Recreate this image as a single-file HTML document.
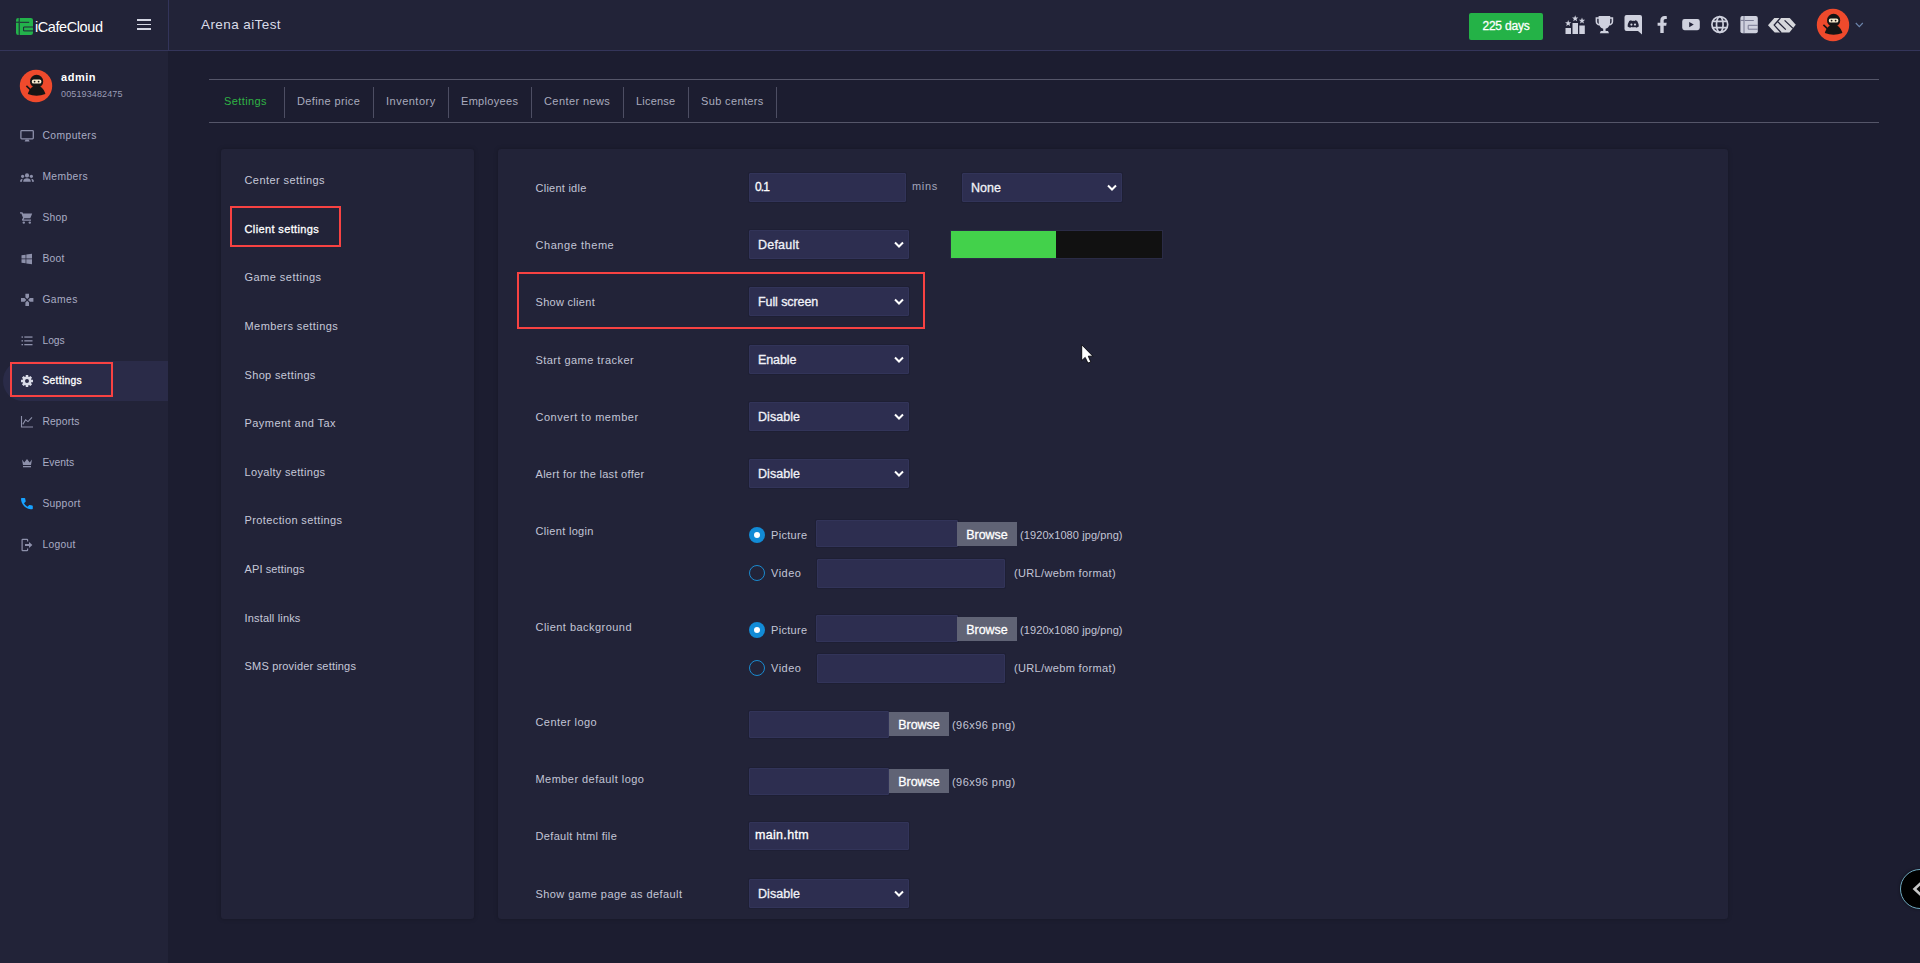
<!DOCTYPE html>
<html lang="en">
<head>
<meta charset="utf-8">
<title>iCafeCloud - Client settings</title>
<style>
*{box-sizing:border-box;margin:0;padding:0}
html,body{width:1920px;height:963px;overflow:hidden;background:#1c1d30;font-family:"Liberation Sans",sans-serif;color:#c3c5d6}
.abs,.t,.inp,.sel,.btn{position:absolute}
.t{white-space:nowrap;line-height:20px;font-size:11px;color:#c3c5d6}
#header{left:0;top:0;width:1920px;height:51px;background:#222338;border-bottom:1px solid #34355a}
#hsep{left:168px;top:0;width:1px;height:50px;background:#33345a}
#sidebar{left:0;top:51px;width:168px;height:912px;background:#222338}
#active{left:3px;top:361px;width:165px;height:40px;background:#2a2b48;border-radius:20px 0 0 20px}
.red{border:2px solid #f84242}
.panel{background:#222338;border-radius:3px;box-shadow:0 0 4px rgba(0,0,0,.25)}
.inp{background:#2d2e50;border-radius:1px;border:1px solid #323459;box-shadow:0 0 0 1px rgba(24,24,44,.3)}
.sel{background:#2d2e50;border-radius:1px;border:1px solid #323459;box-shadow:0 0 0 1px rgba(24,24,44,.3)}
.sel .v{position:absolute;left:8px;top:50%;margin-top:-10px;line-height:20px;font-size:12.5px;color:#f1f2f8;white-space:nowrap}
.sel svg{position:absolute;right:4px;top:50%;margin-top:-4px}
.btn{background:#606375;color:#fff;font-size:12.5px;text-align:center;line-height:26px;white-space:nowrap}
.m{font-size:10.3px;color:#a9acc4}
.s{color:#c6c8d8}
.f{color:#c3c5d6}
.h{color:#b4b6c8}
.tab{color:#a9abbd}
.w{color:#fff}
.v,.btn,.w{-webkit-text-stroke:0.3px currentColor}
#logotxt,.nb{-webkit-text-stroke:0}
.hline{height:1px;background:#555669}
.vsep{width:1px;background:#4d4e63;top:87px;height:31px}
.radio{width:16px;height:16px;border-radius:50%;border:1.4px solid #1a8acf}
.radio.on{background:#128bd6;border:none}
.radio.on:after{content:"";position:absolute;left:4.7px;top:4.7px;width:6.6px;height:6.6px;border-radius:50%;background:#fff}
</style>
</head>
<body>
<div class="abs" id="header"></div>
<div class="abs" id="hsep"></div>
<div class="abs" id="sidebar"></div>
<div class="abs" id="active"></div>
<svg class="abs" style="left:15px;top:17px" width="20" height="19" viewBox="15 17 20 19">
<rect x="16" y="18" width="17" height="17" rx="2.2" fill="#23b24b"/>
<path d="M19.2 18 V35 M16 22.2 H19.2 M20 22.3 H29.2 M33 27 H23.6 V30.9 H33" fill="none" stroke="#222338" stroke-width="1"/>
</svg>
<div class="t w" id="logotxt" style="left:35px;top:17px;font-size:14.5px;line-height:20px;letter-spacing:-0.42px">iCafeCloud</div>
<div class="abs" style="left:136.5px;top:19.2px;width:14.5px;height:1.6px;background:#d4d6e2"></div><div class="abs" style="left:136.5px;top:23.7px;width:14.5px;height:1.6px;background:#d4d6e2"></div><div class="abs" style="left:136.5px;top:28.2px;width:14.5px;height:1.6px;background:#d4d6e2"></div>
<div class="t" id="title" style="left:201px;top:15px;font-size:13.5px;color:#d9dbe8;letter-spacing:0.41px">Arena aiTest</div>
<div class="abs" style="left:1469px;top:13px;width:74px;height:27px;background:#24b247;border-radius:2px"></div>
<div class="t w" id="days" style="left:1469px;top:15px;width:74px;text-align:center;font-size:12px;line-height:22px;letter-spacing:-0.19px">225 days</div>
<svg class="abs" style="left:0;top:0" width="1920" height="51" viewBox="0 0 1920 51"><g fill="#cfd1de">
<rect x="1565.5" y="28" width="5.5" height="6"/><rect x="1572.5" y="23" width="5.5" height="11"/><rect x="1579.3" y="25.5" width="5.5" height="8.5"/>
<polygon points="1568.20,20.00 1569.01,22.18 1571.34,22.28 1569.52,23.73 1570.14,25.97 1568.20,24.69 1566.26,25.97 1566.88,23.73 1565.06,22.28 1567.39,22.18"/><polygon points="1575.20,15.30 1576.01,17.48 1578.34,17.58 1576.52,19.03 1577.14,21.27 1575.20,19.99 1573.26,21.27 1573.88,19.03 1572.06,17.58 1574.39,17.48"/><polygon points="1582.00,17.50 1582.81,19.68 1585.14,19.78 1583.32,21.23 1583.94,23.47 1582.00,22.19 1580.06,23.47 1580.68,21.23 1578.86,19.78 1581.19,19.68"/>
<path d="M1598.6 16 H1610.2 V17.2 H1613.2 V21.5 C1613.2 24 1611.5 25.3 1609.3 25.6 C1608.5 27.4 1607.2 28.4 1605.6 28.8 V31 H1608 L1609 33.2 H1599.8 L1600.8 31 H1603.2 V28.8 C1601.6 28.4 1600.3 27.4 1599.5 25.6 C1597.3 25.3 1595.6 24 1595.6 21.5 V17.2 H1598.6 Z M1597.2 18.8 V21.5 C1597.2 22.8 1597.9 23.6 1598.9 23.9 C1598.7 22.9 1598.6 21.5 1598.6 18.8 Z M1611.6 18.8 H1610.2 C1610.2 21.5 1610.1 22.9 1609.9 23.9 C1610.9 23.6 1611.6 22.8 1611.6 21.5 Z" fill-rule="evenodd"/>
<path d="M1626.5 15 H1640 Q1642 15 1642 17 V34.6 L1638 31 H1626.5 Q1624.5 31 1624.5 29 V17 Q1624.5 15 1626.5 15 Z M1629.2 21 Q1627.6 23.6 1627.6 26.6 Q1628.8 27.6 1630.4 27.8 L1631 26.9 Q1633.2 27.5 1635.4 26.9 L1636 27.8 Q1637.6 27.6 1638.8 26.6 Q1638.8 23.6 1637.2 21 Q1636.2 20.5 1635 20.3 L1634.7 20.9 Q1633.2 20.7 1631.7 20.9 L1631.4 20.3 Q1630.2 20.5 1629.2 21 Z" fill-rule="evenodd"/><circle cx="1631.4" cy="24.6" r="1.1"/><circle cx="1635" cy="24.6" r="1.1"/>
<path d="M1660.3 33 V25.7 H1657.6 V22.7 H1660.3 V20.4 C1660.3 17.6 1662 16 1664.5 16 C1665.7 16 1666.8 16.2 1666.8 16.2 V18.9 H1665.5 C1664.2 18.9 1663.7 19.7 1663.7 20.6 V22.7 H1666.7 L1666.2 25.7 H1663.7 V33 Z"/>
<path d="M1684.6 19 H1697.4 Q1699.8 19 1699.8 21.4 V27.8 Q1699.8 30.2 1697.4 30.2 H1684.6 Q1682.2 30.2 1682.2 27.8 V21.4 Q1682.2 19 1684.6 19 Z M1689.2 22 V27.2 L1693.8 24.6 Z" fill-rule="evenodd"/>
</g>
<g fill="none" stroke="#cfd1de" stroke-width="1.7"><circle cx="1719.8" cy="24.5" r="7.9"/><ellipse cx="1719.8" cy="24.5" rx="3.3" ry="7.9"/><path d="M1712.6 21.4 H1727 M1712.6 27.6 H1727"/></g>
<rect x="1740.4" y="16" width="17.4" height="17.2" rx="2" fill="#cfd1de"/><path d="M1744 16 V33.2 M1740.4 20.4 H1744 M1744.6 20.5 H1753.8 M1757.8 25.3 H1748.2 V29.2 H1757.8" fill="none" stroke="#777991" stroke-width="1"/>
<path d="M1768 25.2 L1774.3 18 H1789.7 L1795.8 24.8 L1789.4 32.6 H1774.7 Z" fill="#d6d7dc"/>
<path d="M1780.4 18 L1774.2 25.1 L1781.2 32.8 M1777.4 21.4 L1785.8 29.6 M1784.6 20.4 L1793 28.4" stroke="#222338" stroke-width="1.3" fill="none"/>
<path d="M1855.8 23 L1859.3 26.6 L1862.8 23" fill="none" stroke="#6d86ad" stroke-width="1.1"/>
<circle cx="1833" cy="25" r="16.2" fill="#ef4a2c"/><circle cx="1833.6" cy="20.4" r="6.6" fill="#151515"/><path d="M1833.6 24.5 C1839 24.5 1841.6 30 1842.4 33 Q1833.6 36.5 1824.8 33 C1825.6 30 1828.2 24.5 1833.6 24.5 Z" fill="#151515"/><path d="M1823.4 24.8 L1828.4 29.6" stroke="#151515" stroke-width="1.6"/><rect x="1828.8" y="18.6" width="9.6" height="4" rx="1.9" fill="#f6ecd0"/><circle cx="1831.6" cy="20.6" r="0.9" fill="#151515"/><circle cx="1835.6" cy="20.6" r="0.9" fill="#151515"/>
</svg>
<svg class="abs" style="left:0;top:60px" width="80" height="52" viewBox="0 60 80 52"><circle cx="36" cy="86" r="16.2" fill="#ef4a2c"/><circle cx="36.6" cy="81.4" r="6.6" fill="#151515"/><path d="M36.6 85.5 C42 85.5 44.6 91 45.4 94 Q36.6 97.5 27.8 94 C28.6 91 31.2 85.5 36.6 85.5 Z" fill="#151515"/><path d="M26.4 85.8 L31.4 90.6" stroke="#151515" stroke-width="1.6"/><rect x="31.8" y="79.6" width="9.6" height="4" rx="1.9" fill="#f6ecd0"/><circle cx="34.6" cy="81.6" r="0.9" fill="#151515"/><circle cx="38.6" cy="81.6" r="0.9" fill="#151515"/></svg>
<div class="t w nb" style="left:61px;top:67px;font-weight:bold;font-size:11px;letter-spacing:0.52px">admin</div>
<div class="t" style="left:61px;top:84px;font-size:9px;color:#9a9cb5;letter-spacing:0.12px">005193482475</div>
<div class="t m" style="left:42.4px;top:126px;letter-spacing:0.45px">Computers</div>
<div class="t m" style="left:42.4px;top:167px;letter-spacing:0.4px">Members</div>
<div class="t m" style="left:42.4px;top:208px;letter-spacing:0.28px">Shop</div>
<div class="t m" style="left:42.4px;top:249px;letter-spacing:0.25px">Boot</div>
<div class="t m" style="left:42.4px;top:290px;letter-spacing:0.44px">Games</div>
<div class="t m" style="left:42.4px;top:331px;letter-spacing:0.01px">Logs</div>
<div class="t m w" style="left:42.4px;top:371px;letter-spacing:0.31px">Settings</div>
<div class="t m" style="left:42.4px;top:412px;letter-spacing:0.16px">Reports</div>
<div class="t m" style="left:42.4px;top:453px;letter-spacing:0.04px">Events</div>
<div class="t m" style="left:42.4px;top:494px;letter-spacing:0.3px">Support</div>
<div class="t m" style="left:42.4px;top:535px;letter-spacing:0.28px">Logout</div>
<div class="abs red" style="left:10px;top:362px;width:103px;height:35px"></div>
<svg class="abs" style="left:0;top:120px" width="60" height="440" viewBox="0 120 60 440"><g fill="#8d90aa" stroke="none">
<rect x="20.9" y="130.7" width="12.4" height="8.2" rx="0.8" fill="none" stroke="#8d90aa" stroke-width="1.3"/><path d="M25.6 139.4 H28.6 L29.6 141.6 H24.6 Z"/>
<circle cx="27" cy="175.4" r="2.1"/><circle cx="22.6" cy="176.3" r="1.6"/><circle cx="31.4" cy="176.3" r="1.6"/>
<path d="M23.2 181.8 C23.2 179.2 25 178.3 27 178.3 C29 178.3 30.8 179.2 30.8 181.8 Z"/><path d="M20 181.8 C20 179.8 21.2 178.8 22.8 178.8 C22.3 179.6 22 180.6 22 181.8 Z"/><path d="M34 181.8 C34 179.8 32.8 178.8 31.2 178.8 C31.7 179.6 32 180.6 32 181.8 Z"/>
<path d="M20 212.2 H22.4 L23.1 213.6 H32.2 L30.3 218.2 H24.3 L23.6 219.5 H31 V220.7 H22.6 Q21.6 220.7 22 219.6 L23 217.8 L21.4 213.4 H20 Z"/><circle cx="23.8" cy="222.6" r="1.2"/><circle cx="29.8" cy="222.6" r="1.2"/>
<path d="M21.5 255.3 L25.6 254.7 V258.6 H21.5 Z M26.3 254.6 L32 253.7 V258.6 H26.3 Z M21.5 259.3 H25.6 V263.3 L21.5 262.7 Z M26.3 259.3 H32 V264.3 L26.3 263.4 Z"/>
<path d="M25.4 293.8 H29 V297.2 L27.2 299 L25.4 297.2 Z M25.4 306 H29 V302.6 L27.2 300.8 L25.4 302.6 Z M21 298.1 V301.7 H24.5 L26.3 299.9 L24.5 298.1 Z M33.4 298.1 V301.7 H29.9 L28.1 299.9 L29.9 298.1 Z"/>
<rect x="21.5" y="336.4" width="1.5" height="1.3"/><rect x="24.3" y="336.4" width="8.2" height="1.3"/>
<rect x="21.5" y="340.2" width="1.5" height="1.3"/><rect x="24.3" y="340.2" width="8.2" height="1.3"/>
<rect x="21.5" y="344.0" width="1.5" height="1.3"/><rect x="24.3" y="344.0" width="8.2" height="1.3"/>
</g>
<path d="M31.30,379.67 L32.98,379.79 L32.98,382.21 L31.30,382.33 L30.98,383.10 L32.08,384.37 L30.37,386.08 L29.10,384.98 L28.33,385.30 L28.21,386.98 L25.79,386.98 L25.67,385.30 L24.90,384.98 L23.63,386.08 L21.92,384.37 L23.02,383.10 L22.70,382.33 L21.02,382.21 L21.02,379.79 L22.70,379.67 L23.02,378.90 L21.92,377.63 L23.63,375.92 L24.90,377.02 L25.67,376.70 L25.79,375.02 L28.21,375.02 L28.33,376.70 L29.10,377.02 L30.37,375.92 L32.08,377.63 L30.98,378.90 Z M29 381 A2 2 0 1 0 25 381 A2 2 0 1 0 29 381 Z" fill="#d9dbe8" fill-rule="evenodd"/>
<path d="M21.5 416 V427 H33" fill="none" stroke="#8d90aa" stroke-width="1.1"/><path d="M22.8 424.4 L25.6 419.8 L28 421.6 L32 417.4" fill="none" stroke="#8d90aa" stroke-width="1.1"/>
<path d="M22 459.4 L24.3 462.6 L27 459 L29.7 462.6 L32 459.4 L31 465 H23 Z" fill="#8d90aa"/><rect x="23" y="466" width="8" height="1.3" fill="#8d90aa"/>
<path d="M22.2 498 H25 Q25.6 498 25.7 498.6 Q25.8 499.8 26.2 500.9 Q26.4 501.4 26 501.8 L24.5 503.3 Q25.7 505.6 28 506.8 L29.5 505.3 Q29.9 504.9 30.4 505.1 Q31.5 505.5 32.7 505.6 Q33.3 505.7 33.3 506.3 V508.6 Q33.3 509.3 32.6 509.3 C26.4 509.3 21.5 504.4 21.5 498.7 Q21.5 498 22.2 498 Z" fill="#17a2ff" transform="translate(-0.5 0)"/>
<path d="M27.6 541.4 V540 Q27.6 539.4 27 539.4 H22.7 Q22.1 539.4 22.1 540 V550 Q22.1 550.6 22.7 550.6 H27 Q27.6 550.6 27.6 550 V548.6" fill="none" stroke="#8d90aa" stroke-width="1.2"/><path d="M25 544 H29 V542 L32.4 545 L29 548 V546 H25 Z" fill="#8d90aa"/>
</svg>
<div class="abs hline" style="left:209px;top:79px;width:1670px"></div>
<div class="abs hline" style="left:209px;top:122px;width:1670px"></div>
<div class="t tab" style="left:224px;top:91px;color:#2fb344;letter-spacing:0.41px">Settings</div>
<div class="t tab" style="left:297px;top:91px;;letter-spacing:0.37px">Define price</div>
<div class="t tab" style="left:386px;top:91px;;letter-spacing:0.49px">Inventory</div>
<div class="t tab" style="left:461px;top:91px;;letter-spacing:0.31px">Employees</div>
<div class="t tab" style="left:544px;top:91px;;letter-spacing:0.41px">Center news</div>
<div class="t tab" style="left:636px;top:91px;;letter-spacing:0.21px">License</div>
<div class="t tab" style="left:701px;top:91px;;letter-spacing:0.36px">Sub centers</div>
<div class="abs vsep" style="left:284px"></div>
<div class="abs vsep" style="left:373px"></div>
<div class="abs vsep" style="left:448px"></div>
<div class="abs vsep" style="left:531px"></div>
<div class="abs vsep" style="left:623px"></div>
<div class="abs vsep" style="left:688px"></div>
<div class="abs vsep" style="left:776px"></div>
<div class="abs panel" style="left:221px;top:149px;width:253px;height:770px"></div>
<div class="t s" style="left:244.5px;top:170px;letter-spacing:0.43px">Center settings</div>
<div class="t s w" style="left:244.5px;top:219px;letter-spacing:0.37px">Client settings</div>
<div class="t s" style="left:244.5px;top:267px;letter-spacing:0.47px">Game settings</div>
<div class="t s" style="left:244.5px;top:316px;letter-spacing:0.43px">Members settings</div>
<div class="t s" style="left:244.5px;top:365px;letter-spacing:0.35px">Shop settings</div>
<div class="t s" style="left:244.5px;top:413px;letter-spacing:0.45px">Payment and Tax</div>
<div class="t s" style="left:244.5px;top:462px;letter-spacing:0.32px">Loyalty settings</div>
<div class="t s" style="left:244.5px;top:510px;letter-spacing:0.39px">Protection settings</div>
<div class="t s" style="left:244.5px;top:559px;letter-spacing:0.11px">API settings</div>
<div class="t s" style="left:244.5px;top:608px;letter-spacing:0.17px">Install links</div>
<div class="t s" style="left:244.5px;top:656px;letter-spacing:0.19px">SMS provider settings</div>
<div class="abs red" style="left:230px;top:206px;width:111px;height:41px"></div>
<div class="abs panel" style="left:498px;top:149px;width:1230px;height:770px"></div>
<div class="t f" style="left:535.5px;top:178.4px;letter-spacing:0.25px">Client idle</div>
<div class="t f" style="left:535.5px;top:235.4px;letter-spacing:0.55px">Change theme</div>
<div class="t f" style="left:535.5px;top:292.4px;letter-spacing:0.3px">Show client</div>
<div class="t f" style="left:535.5px;top:350.4px;letter-spacing:0.45px">Start game tracker</div>
<div class="t f" style="left:535.5px;top:407.4px;letter-spacing:0.53px">Convert to member</div>
<div class="t f" style="left:535.5px;top:464.4px;letter-spacing:0.29px">Alert for the last offer</div>
<div class="t f" style="left:535.5px;top:521.4px;letter-spacing:0.32px">Client login</div>
<div class="t f" style="left:535.5px;top:617.4px;letter-spacing:0.46px">Client background</div>
<div class="t f" style="left:535.5px;top:712.4px;letter-spacing:0.42px">Center logo</div>
<div class="t f" style="left:535.5px;top:769.4px;letter-spacing:0.45px">Member default logo</div>
<div class="t f" style="left:535.5px;top:826.4px;letter-spacing:0.34px">Default html file</div>
<div class="t f" style="left:535.5px;top:884.4px;letter-spacing:0.42px">Show game page as default</div>
<div class="inp" style="left:749px;top:173px;width:157px;height:29px"><span class="t w" style="left:5px;top:3px;font-size:12px;letter-spacing:-0.9px">0.1</span></div>
<div class="t f" style="left:912px;top:176px;color:#a3a5ba;letter-spacing:0.69px">mins</div>
<div class="sel" style="left:962px;top:173px;width:160px;height:29px"><span class="v" style="letter-spacing:0.03px">None</span><svg width="10" height="8" viewBox="0 0 10 8"><path d="M1 1.5 L5 5.5 L9 1.5" fill="none" stroke="#fff" stroke-width="2"/></svg></div>
<div class="sel" style="left:749px;top:230px;width:160px;height:29px"><span class="v" style="letter-spacing:0.21px">Default</span><svg width="10" height="8" viewBox="0 0 10 8"><path d="M1 1.5 L5 5.5 L9 1.5" fill="none" stroke="#fff" stroke-width="2"/></svg></div>
<div class="abs" style="left:950px;top:230px;width:213px;height:29px;background:#111;border:1px solid #2a2b45"><div style="width:105px;height:27px;background:#43d14b"></div></div>
<div class="sel" style="left:749px;top:287px;width:160px;height:29px"><span class="v" style="letter-spacing:-0.09px">Full screen</span><svg width="10" height="8" viewBox="0 0 10 8"><path d="M1 1.5 L5 5.5 L9 1.5" fill="none" stroke="#fff" stroke-width="2"/></svg></div>
<div class="sel" style="left:749px;top:345px;width:160px;height:29px"><span class="v" style="letter-spacing:-0.11px">Enable</span><svg width="10" height="8" viewBox="0 0 10 8"><path d="M1 1.5 L5 5.5 L9 1.5" fill="none" stroke="#fff" stroke-width="2"/></svg></div>
<div class="sel" style="left:749px;top:402px;width:160px;height:29px"><span class="v" style="letter-spacing:0.06px">Disable</span><svg width="10" height="8" viewBox="0 0 10 8"><path d="M1 1.5 L5 5.5 L9 1.5" fill="none" stroke="#fff" stroke-width="2"/></svg></div>
<div class="sel" style="left:749px;top:459px;width:160px;height:29px"><span class="v" style="letter-spacing:0.06px">Disable</span><svg width="10" height="8" viewBox="0 0 10 8"><path d="M1 1.5 L5 5.5 L9 1.5" fill="none" stroke="#fff" stroke-width="2"/></svg></div>
<div class="abs red" style="left:517px;top:272px;width:408px;height:57px"></div>
<div class="abs radio on" style="left:749px;top:527px"></div>
<div class="t f" style="left:771px;top:525px;letter-spacing:0.31px">Picture</div>
<div class="inp" style="left:816px;top:520px;width:142px;height:27px"></div>
<div class="btn" style="left:957px;top:521.5px;width:60px;height:24.5px;letter-spacing:-0.06px">Browse</div>
<div class="t f" style="left:1020px;top:525px;letter-spacing:0.09px">(1920x1080 jpg/png)</div>
<div class="abs radio" style="left:749px;top:565px"></div>
<div class="t f" style="left:771px;top:563px;letter-spacing:0.49px">Video</div>
<div class="inp" style="left:817px;top:559px;width:188px;height:29px"></div>
<div class="t f" style="left:1014px;top:563px;letter-spacing:0.35px">(URL/webm format)</div>
<div class="abs radio on" style="left:749px;top:622px"></div>
<div class="t f" style="left:771px;top:620px;letter-spacing:0.31px">Picture</div>
<div class="inp" style="left:816px;top:615px;width:142px;height:27px"></div>
<div class="btn" style="left:957px;top:616.5px;width:60px;height:24.5px;letter-spacing:-0.06px">Browse</div>
<div class="t f" style="left:1020px;top:620px;letter-spacing:0.09px">(1920x1080 jpg/png)</div>
<div class="abs radio" style="left:749px;top:660px"></div>
<div class="t f" style="left:771px;top:658px;letter-spacing:0.49px">Video</div>
<div class="inp" style="left:817px;top:654px;width:188px;height:29px"></div>
<div class="t f" style="left:1014px;top:658px;letter-spacing:0.35px">(URL/webm format)</div>
<div class="inp" style="left:749px;top:711px;width:140px;height:27px"></div>
<div class="btn" style="left:889px;top:711.5px;width:60px;height:24.5px;letter-spacing:-0.06px">Browse</div>
<div class="t f" style="left:952px;top:715px;letter-spacing:0.45px">(96x96 png)</div>
<div class="inp" style="left:749px;top:768px;width:140px;height:27px"></div>
<div class="btn" style="left:889px;top:768.5px;width:60px;height:24.5px;letter-spacing:-0.06px">Browse</div>
<div class="t f" style="left:952px;top:772px;letter-spacing:0.45px">(96x96 png)</div>
<div class="inp" style="left:749px;top:822px;width:160px;height:28px"><span class="t w" style="left:5px;top:2px;font-size:12.5px;letter-spacing:0.32px">main.htm</span></div>
<div class="sel" style="left:749px;top:879px;width:160px;height:29px"><span class="v" style="letter-spacing:0.06px">Disable</span><svg width="10" height="8" viewBox="0 0 10 8"><path d="M1 1.5 L5 5.5 L9 1.5" fill="none" stroke="#fff" stroke-width="2"/></svg></div>
<div class="abs" style="left:1900px;top:869px;width:40px;height:40px;border-radius:50%;background:#000;border:1px solid #6fa9bf;box-shadow:0 0 3px rgba(0,0,0,.5)"></div>
<svg class="abs" style="left:1909px;top:879px" width="12" height="20" viewBox="0 0 12 20"><path d="M12 4 L5.5 10 L12 16" fill="none" stroke="#c6c6c6" stroke-width="2.6"/></svg>
<svg class="abs" style="left:1079px;top:342px" width="18" height="24" viewBox="1079 342 18 24"><path d="M1081.7 344.8 V360.6 L1085.2 357.4 L1087.9 363.1 L1090.8 361.9 L1088.3 356.2 H1092.9 Z" fill="#fff" stroke="#05050a" stroke-width="0.9" stroke-linejoin="miter"/></svg>
</body>
</html>
